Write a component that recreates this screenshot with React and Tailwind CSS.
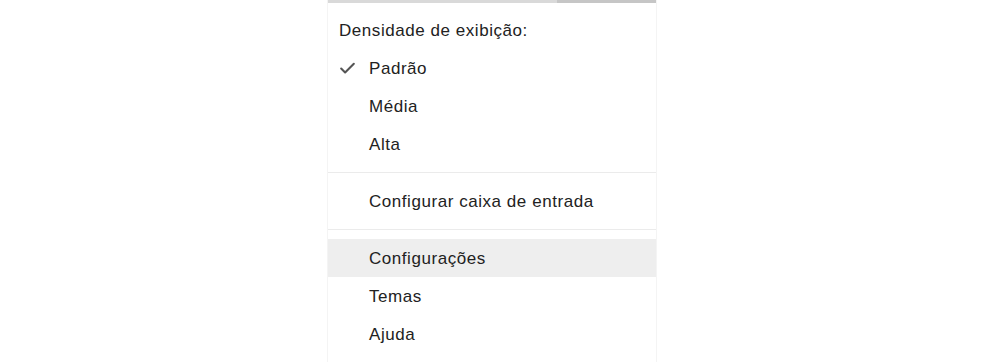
import { Check } from 'lucide-react';

const densities = [
  { label: 'Padrão', checked: true },
  { label: 'Média' },
  { label: 'Alta' },
];

function Item({ label, checked, active }) {
  return (
    <div className={`flex items-center h-[38px] ${active ? 'bg-[#eeeeee]' : ''}`}>
      <div className="w-[41px] flex justify-end pr-[12px]">
        {checked && <Check className="w-[19px] h-[19px] text-[#555]" strokeWidth={2.6} />}
      </div>
      <span className="pt-[2px]">{label}</span>
    </div>
  );
}

export default function App() {
  return (
    <div
      className="w-[984px] h-[362px] bg-white overflow-hidden text-[17px] tracking-[0.55px] text-[#222]"
      style={{ fontFamily: '"Liberation Sans", Arial, sans-serif' }}
    >
      <div className="ml-[327px] w-[330px] h-full border-x border-[#f4f4f4]">
        {/* barra no topo */}
        <div className="flex h-[3px]">
          <div className="w-[229px] bg-[#d9d9d9]" />
          <div className="flex-1 bg-[#c6c6c6]" />
        </div>

        <div className="pt-[8px]">
          <div className="h-[38px] flex items-center pl-[11px] pt-[2px]">Densidade de exibição:</div>
          {densities.map((d) => (
            <Item key={d.label} {...d} />
          ))}
        </div>

        <div className="h-[1px] bg-[#ebebeb] my-[9px]" />
        <Item label="Configurar caixa de entrada" />
        <div className="h-[1px] bg-[#ebebeb] my-[9px]" />

        <Item label="Configurações" active />
        <Item label="Temas" />
        <Item label="Ajuda" />
      </div>
    </div>
  );
}
